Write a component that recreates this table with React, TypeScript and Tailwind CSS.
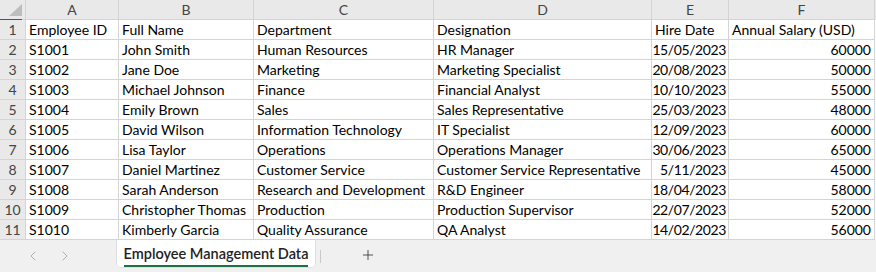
import { ChevronLeft, ChevronRight, Plus } from "lucide-react";

const cols = [
  { label: "A", w: "w-[93px]" },
  { label: "B", w: "w-[135px]" },
  { label: "C", w: "w-[180px]" },
  { label: "D", w: "w-[218px]" },
  { label: "E", w: "w-[77px]" },
  { label: "F", w: "w-[146px]" },
];

const rows: string[][] = [
  ["Employee ID", "Full Name", "Department", "Designation", "Hire Date", "Annual Salary (USD)"],
  ["S1001", "John Smith", "Human Resources", "HR Manager", "15/05/2023", "60000"],
  ["S1002", "Jane Doe", "Marketing", "Marketing Specialist", "20/08/2023", "50000"],
  ["S1003", "Michael Johnson", "Finance", "Financial Analyst", "10/10/2023", "55000"],
  ["S1004", "Emily Brown", "Sales", "Sales Representative", "25/03/2023", "48000"],
  ["S1005", "David Wilson", "Information Technology", "IT Specialist", "12/09/2023", "60000"],
  ["S1006", "Lisa Taylor", "Operations", "Operations Manager", "30/06/2023", "65000"],
  ["S1007", "Daniel Martinez", "Customer Service", "Customer Service Representative", "5/11/2023", "45000"],
  ["S1008", "Sarah Anderson", "Research and Development", "R&D Engineer", "18/04/2023", "58000"],
  ["S1009", "Christopher Thomas", "Production", "Production Supervisor", "22/07/2023", "52000"],
  ["S1010", "Kimberly Garcia", "Quality Assurance", "QA Analyst", "14/02/2023", "56000"],
];

export default function App() {
  return (
    <div className="flex flex-col w-[876px] h-[272px] bg-white text-[14px] text-black overflow-hidden font-['Lato','Liberation_Sans',sans-serif]">
      {/* Column header row */}
      <div className="flex h-5 bg-[#e9e9e9] text-[#444]">
        <div className="relative w-[26px] h-5 border-r border-b border-[#d4d4d4]">
          <svg className="absolute left-[9px] top-[4px]" width="13" height="12" viewBox="0 0 13 12">
            <polygon points="13,0 13,12 0,12" fill="#bdbdbd" />
          </svg>
          <div className="absolute left-0 bottom-[-1px] w-[22px] h-px bg-[#555]" />
        </div>
        {cols.map((c) => (
          <div
            key={c.label}
            className={`${c.w} h-5 flex items-center justify-center pt-[1px] border-r border-b border-[#d4d4d4] leading-none`}
          >
            {c.label}
          </div>
        ))}
      </div>

      {/* Data rows */}
      {rows.map((r, i) => (
        <div key={i} className="flex h-5">
          <div className="w-[26px] h-5 flex items-center justify-center pt-[1px] bg-[#e9e9e9] text-[#444] border-r border-b border-[#d4d4d4] leading-none">
            {i + 1}
          </div>
          {r.map((v, j) => {
            const right = i > 0 && j >= 4;
            const date = i > 0 && j === 4;
            return (
              <div
                key={j}
                className={`${cols[j].w} h-5 flex items-center pt-[1px] border-r border-b border-[#d4d4d4] whitespace-nowrap overflow-hidden leading-none ${
                  right ? "justify-end" : "justify-start"
                } ${date ? "px-[2px] tracking-[-0.4px]" : "px-[3px]"}`}
              >
                {v}
              </div>
            );
          })}
        </div>
      ))}

      {/* Sheet tab bar */}
      <div className="flex-1 flex items-start bg-[#f0f0f0]">
        <div className="flex items-center gap-[16px] pl-[25px] pt-[8px] text-[#a0a0a0]">
          <ChevronLeft size={16} strokeWidth={1.25} />
          <ChevronRight size={16} strokeWidth={1.25} />
        </div>
        <div className="ml-[43px] w-[200px] h-[28px] bg-white border border-t-0 border-[#e0e0e0] rounded-b-[5px] flex flex-col items-center pt-[5px]">
          <span className="font-semibold text-[14.5px] leading-[18px] text-[#222]">Employee Management Data</span>
          <div className="mt-[2px] w-[184px] h-[2px] bg-[#1e7145]" />
        </div>
        <div className="ml-[4px] mt-[10px] w-px h-[13px] bg-[#c8c8c8]" />
        <div className="ml-[39px] mt-[7px] text-[#333]">
          <Plus size={16} strokeWidth={1.25} />
        </div>
      </div>
    </div>
  );
}
